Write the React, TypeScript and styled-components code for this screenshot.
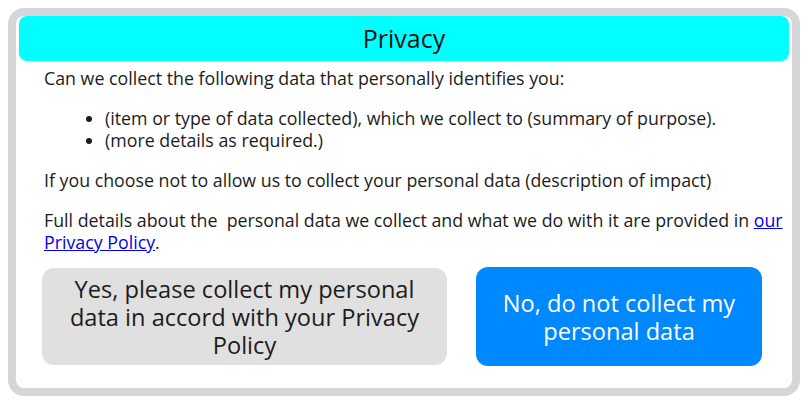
import React from "react";
import styled, { createGlobalStyle } from "styled-components";

const GlobalStyle = createGlobalStyle`
  html, body { background: #ffffff; }
  body {
    margin: 8px;
    font-family: "Open Sans", "Noto Sans", sans-serif;
    color: #1c1c1c;
  }
  * { box-sizing: border-box; }
`;

const Dialog = styled.section`
  width: 792px;
  border: 8px solid #d5d5da;
  border-radius: 16px;
  background: #ffffff;
  display: flex;
  flex-direction: column;
`;

const Header = styled.h1`
  margin: 0 3px;
  height: 45px;
  background: #00ffff;
  border-radius: 8px;
  font-size: 25px;
  font-weight: 400;
  line-height: 45px;
  text-align: center;
  color: #141414;
`;

const Body = styled.div`
  padding: 6px 7px 0 28px;
  font-size: 17.8px;
  line-height: 22px;
`;

const Para = styled.p<{ $last?: boolean }>`
  margin: 0 0 ${(p) => (p.$last ? "0" : "18px")};
`;

const List = styled.ul`
  margin: 0 0 18px;
  padding-left: 61px;
`;

const Item = styled.li`
  margin: 0;
`;

const Link = styled.a`
  color: #0000ee;
  text-decoration: underline;
`;

const Actions = styled.div`
  display: flex;
  align-items: center;
  gap: 29px;
  padding: 14px 30px 22px 26px;
`;

const Choice = styled.button<{ $primary?: boolean }>`
  flex: none;
  width: ${(p) => (p.$primary ? "286px" : "405px")};
  height: ${(p) => (p.$primary ? "99px" : "97px")};
  padding: 0 18px;
  border: none;
  border-radius: 12px;
  background: ${(p) => (p.$primary ? "#0088ff" : "#e0e0e0")};
  color: ${(p) => (p.$primary ? "#ffffff" : "#1c1c1c")};
  font-family: "Open Sans", "Noto Sans", sans-serif;
  font-size: 23.6px;
  line-height: 28px;
  text-align: center;
  cursor: pointer;
`;

export default function App() {
  return (
    <>
      <GlobalStyle />
      <Dialog>
        <Header>Privacy</Header>
        <Body>
          <Para>Can we collect the following data that personally identifies you:</Para>
          <List>
            <Item>(item or type of data collected), which we collect to (summary of purpose).</Item>
            <Item>(more details as required.)</Item>
          </List>
          <Para>If you choose not to allow us to collect your personal data (description of impact)</Para>
          <Para $last>
            Full details about the{"\u00a0"} personal data we collect and what we do with it are provided in{" "}
            <Link href="#">our Privacy Policy</Link>.
          </Para>
        </Body>
        <Actions>
          <Choice>Yes, please collect my personal data in accord with your Privacy Policy</Choice>
          <Choice $primary>No, do not collect my personal data</Choice>
        </Actions>
      </Dialog>
    </>
  );
}
